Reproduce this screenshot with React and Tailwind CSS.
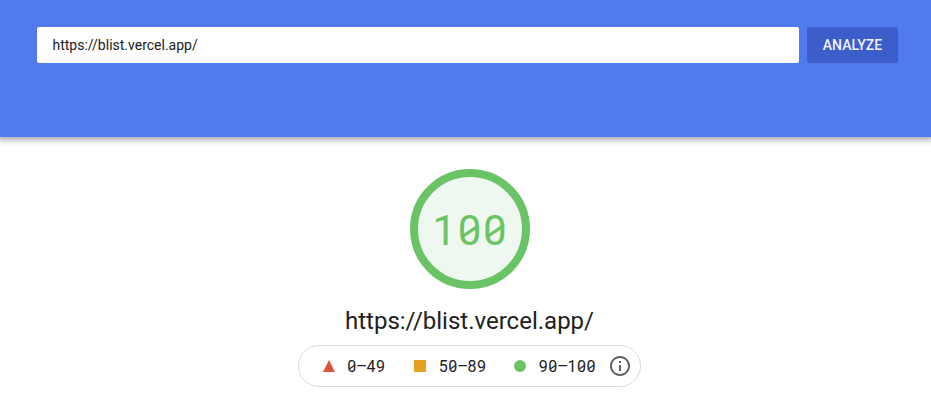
import React from 'react';

// Fixed-width digits with a slashed zero
function MonoText({ children, className = '' }) {
  return (
    <span className={`inline-flex ${className}`}>
      {children.split('').map((char, i) => (
        <span
          key={i}
          className={`relative flex w-[0.6em] justify-center ${char === '–' ? 'scale-x-110' : ''}`}
        >
          {char}
          {char === '0' && (
            <svg
              className="absolute top-1/2 left-1/2 h-[0.71em] w-[0.46em] -translate-x-1/2 -translate-y-[47%]"
              viewBox="0 0 46 71"
              fill="none"
              stroke="currentColor"
              strokeWidth="7.5"
              aria-hidden="true"
            >
              <path d="M6 46 L40 23" />
            </svg>
          )}
        </span>
      ))}
    </span>
  );
}

function InfoIcon() {
  return (
    <svg className="h-6 w-6 fill-[#616161]" viewBox="0 0 24 24">
      <path d="M11 17h2v-6h-2v6zm1-15C6.48 2 2 6.48 2 12s4.48 10 10 10 10-4.48 10-10S17.52 2 12 2zm0 18c-4.41 0-8-3.59-8-8s3.59-8 8-8 8 3.59 8 8-3.59 8-8 8zM11 9h2V7h-2v2z" />
    </svg>
  );
}

export default function App() {
  return (
    <div className="h-[406px] w-[931px] overflow-hidden bg-white font-['Roboto',sans-serif] text-[#212121]">
      <header className="flex h-[137px] gap-2 bg-[#4f7bef] pt-[27px] pr-[33px] pl-[37px] shadow-[0_0_6px_3px_rgba(0,0,0,0.34)]">
        <div className="flex h-9 w-[762px] items-center rounded-xs bg-white pl-[15.5px] text-sm">
          https://blist.vercel.app/
        </div>
        <button className="h-9 w-[91px] rounded-xs bg-[#3d5dcb] text-sm font-medium text-white/95">
          ANALYZE
        </button>
      </header>
      <main className="flex flex-col items-center pt-8 pl-2">
        <div className="flex h-[120px] w-[120px] items-center justify-center rounded-full border-8 border-[#6ac465] bg-[#eff8f0] pt-[3px] text-[42px] leading-none text-[#6ac465]">
          <MonoText>100</MonoText>
        </div>
        <h1 className="mt-4 text-2xl leading-8">https://blist.vercel.app/</h1>
        <div className="mt-2 flex h-[42px] w-[343px] items-center rounded-full border border-[#dadada] pl-6 text-base">
          <svg className="mr-3 h-3 w-3 fill-[#db5540]" viewBox="0 0 12 12">
            <path d="M6 0 L12 12 H0 Z" />
          </svg>
          <MonoText className="pt-px">0–49</MonoText>
          <span className="mr-3 ml-[29px] h-3 w-3 bg-[#e8a023]" />
          <MonoText className="pt-px">50–89</MonoText>
          <span className="mr-3 ml-7 h-3 w-3 rounded-full bg-[#6ac465]" />
          <MonoText className="mr-3 pt-px">90–100</MonoText>
          <InfoIcon />
        </div>
      </main>
    </div>
  );
}
